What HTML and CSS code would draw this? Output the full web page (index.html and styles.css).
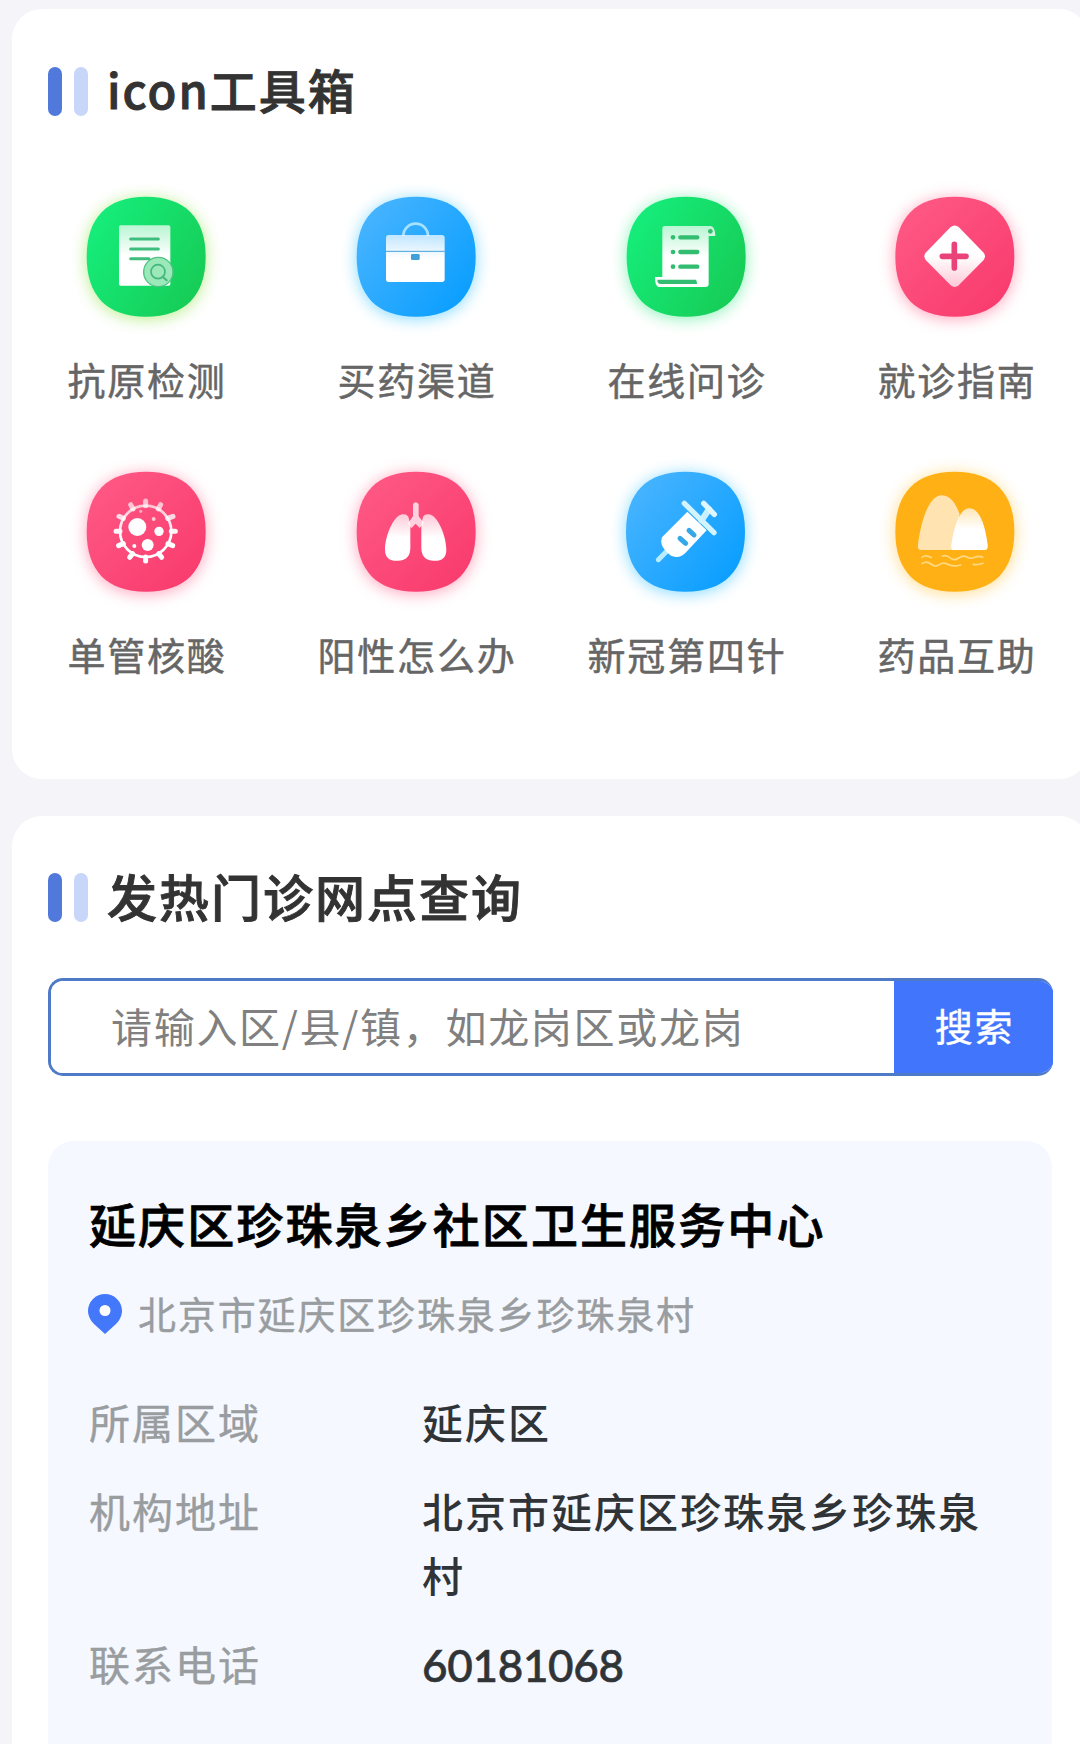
FILE: index.html
```html
<!DOCTYPE html>
<html lang="zh-CN">
<head>
    <meta charset="UTF-8">
    <meta name="viewport" content="width=device-width, initial-scale=1.0">
    <title>icon工具箱</title>
    <link rel="stylesheet" href="styles.css">
</head>
<body>
    <!-- shared gradients and the icon background shape -->
    <svg class="defs" width="0" height="0" aria-hidden="true">
        <defs>
            <linearGradient id="green" x1="0" y1="0.2" x2="1" y2="0.8">
                <stop offset="0" stop-color="#16ee7c"/>
                <stop offset="1" stop-color="#16cb55"/>
            </linearGradient>
            <linearGradient id="blue" x1="0" y1="0.1" x2="1" y2="0.9">
                <stop offset="0" stop-color="#4bb5ff"/>
                <stop offset="1" stop-color="#069dff"/>
            </linearGradient>
            <linearGradient id="pink" x1="0" y1="0" x2="1" y2="1">
                <stop offset="0" stop-color="#ff5b87"/>
                <stop offset="1" stop-color="#f8386b"/>
            </linearGradient>
            <linearGradient id="fade" x1="0" y1="0" x2="0" y2="1">
                <stop offset="0" stop-color="#fff" stop-opacity="0.7"/>
                <stop offset="0.5" stop-color="#fff"/>
            </linearGradient>
            <linearGradient id="fadeDown" x1="0" y1="0" x2="0" y2="1">
                <stop offset="0.5" stop-color="#fff"/>
                <stop offset="1" stop-color="#fff" stop-opacity="0.7"/>
            </linearGradient>
            <linearGradient id="fadeVirus" gradientUnits="userSpaceOnUse" x1="0" y1="130" x2="0" y2="325">
                <stop offset="0" stop-color="#fff" stop-opacity="0.6"/>
                <stop offset="0.6" stop-color="#fff"/>
            </linearGradient>
            <path id="blob" d="M228 50C345 50 407 113 407 230S345 410 228 410S50 347 50 230S111 50 228 50Z"/>
        </defs>
    </svg>

    <div class="card tools">
        <h2 class="title title-tools">icon工具箱</h2>
        <div class="grid">
            <div class="item">
                <svg class="icon glow-lime" viewBox="0 0 450 450">
                    <use href="#blob" fill="url(#green)"/>
                    <rect x="147" y="136" width="154" height="181" rx="5" fill="url(#fade)"/>
                    <path d="M182 177h83M182 207h83M182 236h55" stroke="#3fbd7c" stroke-width="9" stroke-linecap="round"/>
                    <circle cx="265" cy="276" r="44" fill="#9be8b9" stroke="#4fc283" stroke-width="4"/>
                    <circle cx="264" cy="275" r="21" fill="none" stroke="#45b77e" stroke-width="5"/>
                    <path d="M278 290l12 11" stroke="#45b77e" stroke-width="6" stroke-linecap="round"/>
                </svg>
                <span class="label">抗原检测</span>
            </div>
            <div class="item">
                <svg class="icon glow-blue" viewBox="0 0 450 450">
                    <use href="#blob" fill="url(#blue)"/>
                    <path d="M190 168a37 37 0 0 1 74 0" fill="none" stroke="#a5e2ff" stroke-width="8"/>
                    <rect x="138" y="165" width="176" height="141" rx="8" fill="url(#fade)"/>
                    <path d="M138 214h176" stroke="#45a3d8" stroke-width="3"/>
                    <rect x="213" y="222" width="26" height="18" rx="4" fill="#409fd8"/>
                </svg>
                <span class="label">买药渠道</span>
            </div>
            <div class="item">
                <svg class="icon glow-green" viewBox="0 0 450 450">
                    <use href="#blob" fill="url(#green)"/>
                    <path d="M164 138H303Q316 142 316 168H296V312Q296 321 286 321H145Q134 316 135 291H157V146Q157 138 164 138Z" fill="url(#fade)"/>
                    <circle cx="301" cy="154" r="7" fill="#30bf6c"/>
                    <path d="M211 172h51M211 216h51M211 260h51" stroke="#32bd70" stroke-width="13" stroke-linecap="round"/>
                    <g fill="#32bd70">
                        <circle cx="189" cy="172" r="7"/>
                        <circle cx="189" cy="216" r="7"/>
                        <circle cx="189" cy="260" r="7"/>
                        <path d="M142 299H258Q261 304 261 312H150Q142 310 142 299Z"/>
                    </g>
                </svg>
                <span class="label">在线问诊</span>
            </div>
            <div class="item">
                <svg class="icon glow-pink" viewBox="0 0 450 450">
                    <use href="#blob" x="-4" fill="url(#pink)"/>
                    <path d="M212 141Q224 132 236 141L311 218Q319 229 311 240L236 316Q224 326 212 316L137 240Q129 229 137 218Z" fill="url(#fadeDown)"/>
                    <path d="M223 193v71M187 229h71" stroke="#e9437a" stroke-width="17" stroke-linecap="round"/>
                </svg>
                <span class="label">就诊指南</span>
            </div>
            <div class="item">
                <svg class="icon glow-pink" viewBox="0 0 450 450">
                    <use href="#blob" fill="url(#pink)"/>
                    <g fill="none" stroke="url(#fadeVirus)">
                        <circle cx="227" cy="229" r="77" stroke-width="8"/>
                        <path d="M226.900 152V138M265 162L272 149M293 190L309 184M304 229.100H316M294 266L308 272M266 296L275 307M226.900 306V318M188 296L179 307M160 266L146 272M150 229.100H138M160 190L147 184M189 162L182 149" stroke-width="15" stroke-linecap="round"/>
                    </g>
                    <g fill="#fff">
                        <circle cx="202" cy="216" r="27"/>
                        <circle cx="267" cy="229" r="14"/>
                        <circle cx="233" cy="270" r="18"/>
                        <circle cx="193" cy="273" r="6"/>
                        <circle cx="251" cy="192" r="6" opacity="0.7"/>
                        <circle cx="212" cy="169" r="5" opacity="0.5"/>
                    </g>
                </svg>
                <span class="label">单管核酸</span>
            </div>
            <div class="item">
                <svg class="icon glow-pink" viewBox="0 0 450 450">
                    <use href="#blob" fill="url(#pink)"/>
                    <path d="M219 147Q227 137 236 147V184L252 204L239 219L227 206L214 220L204 205L219 184Z" fill="#ffd0dd"/>
                    <path d="M205 185Q199 176 187 178C160 181 135 246 135 284C135 309 150 318 174 317C199 316 211 303 211 278V209Z" fill="url(#fade)"/>
                    <path d="M249 185Q255 176 267 178C294 181 319 246 319 284C319 309 305 318 281 317C256 316 244 303 244 278V209Z" fill="url(#fade)"/>
                </svg>
                <span class="label">阳性怎么办</span>
            </div>
            <div class="item">
                <svg class="icon glow-blue" viewBox="0 0 450 450">
                    <use href="#blob" x="-2" fill="url(#blue)"/>
                    <g stroke-linecap="round" fill="none">
                        <path d="M145 314L173 286" stroke="#b8ecff" stroke-width="15"/>
                        <path d="M275 196L297 163" stroke="#c8f0ff" stroke-width="19"/>
                        <path d="M281 145L313 178" stroke="#dff7ff" stroke-width="16"/>
                        <path d="M223 145L312 233" stroke="#d1f4ff" stroke-width="16"/>
                    </g>
                    <path d="M232 170L290 226L226 294Q210 309 194 305Q182 304 173 294L162 281Q149 267 156 247Z" fill="#fff"/>
                    <path d="M237 226l15 14M210 250l17 15" stroke="#35a8e7" stroke-width="15" stroke-linecap="round"/>
                </svg>
                <span class="label">新冠第四针</span>
            </div>
            <div class="item">
                <svg class="icon glow-orange" viewBox="0 0 450 450">
                    <use href="#blob" x="-4" fill="#ffb014"/>
                    <path d="M122 285Q112 284 114 270C122 206 145 121 185 121C212 121 227 147 239 177L220 285Z" fill="#ffe4b2"/>
                    <path d="M220 285Q212 283 214 270C220 230 236 160 267 160C301 160 316 215 323 269Q325 284 314 285Z" fill="url(#fade)"/>
                    <path d="M126 307Q138 298 154 308M187 303Q200 299 211 309T236 309T260 306T284 307T308 307M126 326Q140 316 153 327T178 329T203 328T242 330M280 328Q294 331 309 325" fill="none" stroke="#ffda82" stroke-width="5" stroke-linecap="round"/>
                </svg>
                <span class="label">药品互助</span>
            </div>
        </div>
    </div>

    <div class="card clinic">
        <h2 class="title title-clinic">发热门诊网点查询</h2>
        <form class="search">
            <input type="text" class="search-input" placeholder="请输入区/县/镇，如龙岗区或龙岗">
            <button type="button" class="search-btn">搜索</button>
        </form>

        <div class="result">
            <h3 class="name">延庆区珍珠泉乡社区卫生服务中心</h3>
            <div class="address">
                <svg class="pin" viewBox="0 0 34 40">
                    <path d="M17 0A17 17 0 0 1 34 17C34 22 31 27 28 30L17 40L6 30C3 27 0 22 0 17A17 17 0 0 1 17 0Z" fill="#4478fb"/>
                    <circle cx="17" cy="16.500" r="5.500" fill="#fff"/>
                </svg>
                <span>北京市延庆区珍珠泉乡珍珠泉村</span>
            </div>
            <dl class="info">
                <dt>所属区域</dt>
                <dd>延庆区</dd>
                <dt>机构地址</dt>
                <dd>北京市延庆区珍珠泉乡珍珠泉村</dd>
                <dt>联系电话</dt>
                <dd class="phone">60181068</dd>
            </dl>
        </div>
    </div>
</body>
</html>
```
FILE: styles.css
```css
* {
    box-sizing: border-box;
}
body {
    margin: 0;
    padding: 9px 0 0 12px;
    height: 1744px;
    overflow: hidden;
    background-color: #f4f4f9;
    font-family: "Noto Sans CJK SC", sans-serif;
}
.defs {
    display: block;
}
.card {
    width: 1077px;
    background-color: #fff;
    border-radius: 30px;
}
.tools {
    height: 770px;
    padding-top: 42px;
}
.clinic {
    height: 928px;
    margin-top: 37px;
    padding: 41px 36px 0;
    border-radius: 30px 30px 0 0;
}
.title {
    display: flex;
    align-items: center;
    margin: 0;
    height: 76px;
    line-height: 76px;
    font-weight: 500;
    color: #333;
    -webkit-text-stroke: 0.9px #333;
}
/* dark and light bar in front of the title */
.title::before {
    content: "";
    width: 14px;
    height: 49px;
    margin: 4px 45px 0 0;
    border-radius: 7px;
    background-color: #5079db;
    box-shadow: 26px 0 #c8d6f9;
}
.title-tools {
    padding-left: 36px;
    font-size: 47px;
    letter-spacing: 2px;
}
.title-clinic {
    font-size: 50px;
    letter-spacing: 2px;
}
.grid {
    display: grid;
    grid-template-columns: repeat(4, 1fr);
    row-gap: 48px;
    width: 1080px;
    margin: 53px 0 0 -2px;
}
.item {
    display: flex;
    flex-direction: column;
    align-items: center;
}
.icon {
    width: 150px;
    height: 150px;
    overflow: visible;
}
.glow-lime {
    filter: drop-shadow(0 2px 8px #b9ee8c);
}
.glow-green {
    filter: drop-shadow(0 2px 8px #8af2b8);
}
.glow-blue {
    filter: drop-shadow(0 2px 8px #86dbff);
}
.glow-pink {
    filter: drop-shadow(0 2px 8px #ffa3bc);
}
.glow-orange {
    filter: drop-shadow(0 2px 8px #ffdc8c);
}
.label {
    margin-top: 22px;
    padding-left: 4px;
    line-height: 54px;
    margin-bottom: 1px;
    font-size: 38px;
    letter-spacing: 1.8px;
    color: #666;
    -webkit-text-stroke: 0.5px #666;
}
.search {
    display: flex;
    width: 1005px;
    height: 98px;
    margin: 45px 0 0;
    border: 3px solid #4f7ac8;
    border-right: none;
    border-radius: 15px;
    overflow: hidden;
}
.search-input {
    flex: 1;
    min-width: 0;
    padding: 0 0 5px 60px;
    border: none;
    outline: none;
    font-family: inherit;
    font-size: 41px;
    letter-spacing: 1.7px;
}
.search-input::placeholder {
    color: #808080;
    opacity: 1;
}
.search-btn {
    width: 159px;
    padding: 0 0 5px 2px;
    border: none;
    background-color: #4176fc;
    color: #fff;
    font-family: inherit;
    font-size: 38px;
    letter-spacing: 1.8px;
    /* covers the darker frame above and below the button */
    box-shadow: 0 0 0 3px #4176fc;
    clip-path: inset(-3px 0 -3px 0);
    -webkit-text-stroke: 0.4px #fff;
}
.result {
    width: 1004px;
    height: 603px;
    margin-top: 65px;
    padding: 46px 40px 0 41px;
    background-color: #f5f8ff;
    border-radius: 26px 26px 0 0;
}
.name {
    margin: 0;
    line-height: 72px;
    font-size: 47px;
    font-weight: 500;
    letter-spacing: 2.1px;
    color: #000;
    white-space: nowrap;
    -webkit-text-stroke: 0.8px #000;
}
.address {
    display: flex;
    align-items: center;
    margin: 27px 0 0 -1px;
    line-height: 54px;
    font-size: 38px;
    letter-spacing: 1.85px;
    color: #999da0;
    -webkit-text-stroke: 0.4px #999da0;
}
.pin {
    width: 34px;
    height: 40px;
    margin: 2px 16px 0 0;
}
.info {
    display: grid;
    grid-template-columns: 333px 1fr;
    row-gap: 25px;
    margin: 49px 0 0;
    line-height: 64px;
    font-size: 41px;
    letter-spacing: 2px;
}
.info dt {
    color: #999da0;
    -webkit-text-stroke: 0.4px #999da0;
}
.info dd {
    margin: 0;
    font-weight: 500;
    color: #303437;
}
.info .phone {
    padding-top: 2px;
    font-family: Lato, "Noto Sans CJK SC", sans-serif;
    font-size: 44px;
    letter-spacing: -0.3px;
    -webkit-text-stroke: 0.6px #303437;
}
```
